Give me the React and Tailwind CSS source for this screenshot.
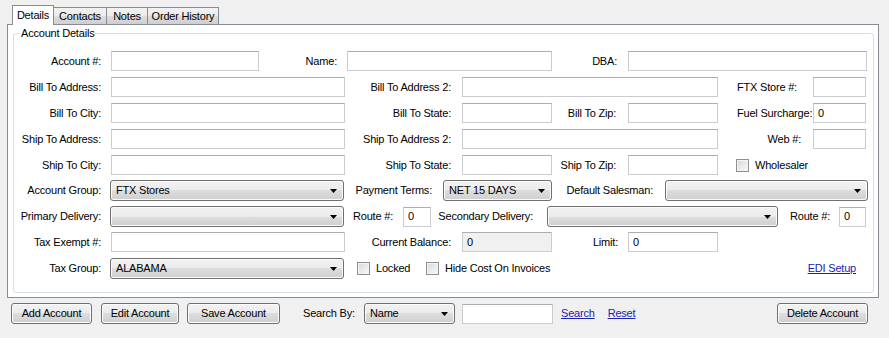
import React from "react";

const FONT = "font-['Liberation_Sans',Arial,sans-serif]";

function Label({ className = "", children }) {
  return <div className={`shrink-0 whitespace-nowrap ${className}`}>{children}</div>;
}

function TextBox({ className = "", value = "", grey = false }) {
  return (
    <div
      className={`h-[20px] shrink-0 flex items-center pl-[4px] border border-[#c9cdd2] border-t-[#abadb3] ${
        grey ? "bg-[#f0f0f0]" : "bg-white"
      } ${className}`}
    >
      {value}
    </div>
  );
}

function Arrow() {
  return (
    <svg width="7" height="4" viewBox="0 0 7 4" className="shrink-0">
      <polygon points="0,0 7,0 3.5,4" fill="#000" />
    </svg>
  );
}

function Combo({ className = "", value = "" }) {
  return (
    <div
      className={`h-[21px] shrink-0 flex items-center justify-between pl-[5px] pr-[6px] rounded-[3px] border border-[#707070] shadow-[inset_0_0_0_1px_#fbfbfb] bg-[linear-gradient(to_bottom,#f2f2f2_0%,#ebebeb_50%,#dddddd_50%,#cfcfcf_100%)] ${className}`}
    >
      <span>{value}</span>
      <Arrow />
    </div>
  );
}

function CheckBox({ className = "", label }) {
  return (
    <div className={`shrink-0 flex items-center gap-[6px] ${className}`}>
      <div className="w-[13px] h-[13px] border border-[#8e8f8f] shadow-[inset_0_0_0_1px_#f4f4f4] bg-[linear-gradient(135deg,#d6d9dd,#f9f9f9)]" />
      <span className="whitespace-nowrap">{label}</span>
    </div>
  );
}

function Btn({ className = "", children }) {
  return (
    <div
      className={`h-[21px] shrink-0 flex items-center justify-center rounded-[3px] border border-[#707070] shadow-[inset_0_0_0_1px_#fcfcfc] bg-[linear-gradient(to_bottom,#f2f2f2_0%,#ebebeb_50%,#dddddd_50%,#cfcfcf_100%)] ${className}`}
    >
      {children}
    </div>
  );
}

export default function App() {
  return (
    <div className={`w-[889px] h-[338px] bg-[#f0f0f0] text-[11px] leading-[13px] tracking-[-0.2px] text-black ${FONT}`}>
      {/* Tabs */}
      <div className="h-[24px] flex items-end pl-[12px] relative z-10">
        <div className="w-[42px] h-[20px] -mb-[1px] bg-white border border-b-0 border-[#898c95] flex items-center justify-center pb-[1px]">
          Details
        </div>
        <div className="w-[53px] h-[17px] border-t border-r border-[#898c95] bg-[linear-gradient(to_bottom,#f2f2f2_0%,#ebebeb_50%,#dddddd_50%,#cfcfcf_100%)] flex items-center justify-center">
          Contacts
        </div>
        <div className="w-[41px] h-[17px] border-t border-r border-[#898c95] bg-[linear-gradient(to_bottom,#f2f2f2_0%,#ebebeb_50%,#dddddd_50%,#cfcfcf_100%)] flex items-center justify-center">
          Notes
        </div>
        <div className="w-[71px] h-[17px] border-t border-r border-[#898c95] bg-[linear-gradient(to_bottom,#f2f2f2_0%,#ebebeb_50%,#dddddd_50%,#cfcfcf_100%)] flex items-center justify-center">
          Order History
        </div>
      </div>

      {/* Tab page */}
      <div className="ml-[7px] w-[872px] h-[274px] bg-white border border-[#898c95]">
        <fieldset className="ml-[5px] mt-[1px] w-[861px] h-[267px] border border-[#d5dfe5] rounded-[3px]">
          <legend className="ml-[6px] px-[1px] leading-[14px]">Account Details</legend>

          {/* Row 1 */}
          <div className="mt-[11px] h-[20px] flex items-center">
            <Label className="w-[87px] text-right">Account #:</Label>
            <TextBox className="ml-[10px] w-[148px]" />
            <Label className="w-[78px] text-right">Name:</Label>
            <TextBox className="ml-[10px] w-[205px]" />
            <Label className="w-[65px] text-right">DBA:</Label>
            <TextBox className="ml-[11px] w-[239px]" />
          </div>

          {/* Row 2 */}
          <div className="mt-[6px] h-[20px] flex items-center">
            <Label className="w-[87px] text-right">Bill To Address:</Label>
            <TextBox className="ml-[10px] w-[234px]" />
            <Label className="w-[106px] text-right">Bill To Address 2:</Label>
            <TextBox className="ml-[11px] w-[256px]" />
            <Label className="ml-[19px] w-[76px]">FTX Store #:</Label>
            <TextBox className="w-[53px]" />
          </div>

          {/* Row 3 */}
          <div className="mt-[6px] h-[20px] flex items-center">
            <Label className="w-[87px] text-right">Bill To City:</Label>
            <TextBox className="ml-[10px] w-[234px]" />
            <Label className="w-[106px] text-right">Bill To State:</Label>
            <TextBox className="ml-[11px] w-[90px]" />
            <Label className="w-[64px] text-right">Bill To Zip:</Label>
            <TextBox className="ml-[12px] w-[90px]" />
            <Label className="ml-[19px] w-[76px]">Fuel Surcharge:</Label>
            <TextBox className="w-[53px]" value="0" />
          </div>

          {/* Row 4 */}
          <div className="mt-[6px] h-[20px] flex items-center">
            <Label className="w-[87px] text-right">Ship To Address:</Label>
            <TextBox className="ml-[10px] w-[234px]" />
            <Label className="w-[106px] text-right">Ship To Address 2:</Label>
            <TextBox className="ml-[11px] w-[256px]" />
            <Label className="w-[83px] text-right">Web #:</Label>
            <TextBox className="ml-[12px] w-[53px]" />
          </div>

          {/* Row 5 */}
          <div className="mt-[6px] h-[20px] flex items-center">
            <Label className="w-[87px] text-right">Ship To City:</Label>
            <TextBox className="ml-[10px] w-[234px]" />
            <Label className="w-[106px] text-right">Ship To State:</Label>
            <TextBox className="ml-[11px] w-[90px]" />
            <Label className="w-[64px] text-right">Ship To Zip:</Label>
            <TextBox className="ml-[12px] w-[90px]" />
            <CheckBox className="ml-[18px]" label="Wholesaler" />
          </div>

          {/* Row 6 */}
          <div className="mt-[5px] h-[21px] flex items-center">
            <Label className="w-[87px] text-right">Account Group:</Label>
            <Combo className="ml-[9px] w-[234px]" value="FTX Stores" />
            <Label className="w-[88px] text-right">Payment Terms:</Label>
            <Combo className="ml-[11px] w-[109px]" value="NET 15 DAYS" />
            <Label className="w-[101px] text-right">Default Salesman:</Label>
            <Combo className="ml-[12px] w-[203px]" />
          </div>

          {/* Row 7 */}
          <div className="mt-[5px] h-[21px] flex items-center">
            <Label className="w-[87px] text-right">Primary Delivery:</Label>
            <Combo className="ml-[9px] w-[234px]" />
            <Label className="w-[49px] text-right">Route #:</Label>
            <TextBox className="ml-[10px] w-[28px]" value="0" />
            <Label className="w-[102px] text-right">Secondary Delivery:</Label>
            <Combo className="ml-[14px] w-[231px]" />
            <Label className="w-[52px] text-right">Route #:</Label>
            <TextBox className="ml-[9px] w-[27px]" value="0" />
          </div>

          {/* Row 8 */}
          <div className="mt-[5px] h-[20px] flex items-center">
            <Label className="w-[87px] text-right">Tax Exempt #:</Label>
            <TextBox className="ml-[10px] w-[234px]" />
            <Label className="w-[106px] text-right">Current Balance:</Label>
            <TextBox className="ml-[11px] w-[90px]" value="0" grey />
            <Label className="w-[66px] text-right">Limit:</Label>
            <TextBox className="ml-[10px] w-[90px]" value="0" />
          </div>

          {/* Row 9 */}
          <div className="mt-[6px] h-[21px] flex items-center">
            <Label className="w-[87px] text-right">Tax Group:</Label>
            <Combo className="ml-[9px] w-[234px]" value="ALABAMA" />
            <CheckBox className="ml-[13px] w-[69px]" label="Locked" />
            <CheckBox label="Hide Cost On Invoices" />
            <a className="ml-auto mr-[17px] text-[#1a22b5] underline cursor-pointer">EDI Setup</a>
          </div>
        </fieldset>
      </div>

      {/* Bottom bar */}
      <div className="mt-[5px] h-[21px] flex items-center pl-[11px]">
        <Btn className="w-[81px]">Add Account</Btn>
        <Btn className="ml-[9px] w-[78px]">Edit Account</Btn>
        <Btn className="ml-[8px] w-[93px]">Save Account</Btn>
        <Label className="ml-[23px] w-[61px]">Search By:</Label>
        <Combo className="w-[91px]" value="Name" />
        <TextBox className="ml-[7px] w-[91px]" />
        <a className="ml-[8px] text-[#1a22b5] underline cursor-pointer">Search</a>
        <a className="ml-[13px] text-[#1a22b5] underline cursor-pointer">Reset</a>
        <Btn className="ml-auto mr-[21px] w-[91px]">Delete Account</Btn>
      </div>
    </div>
  );
}
